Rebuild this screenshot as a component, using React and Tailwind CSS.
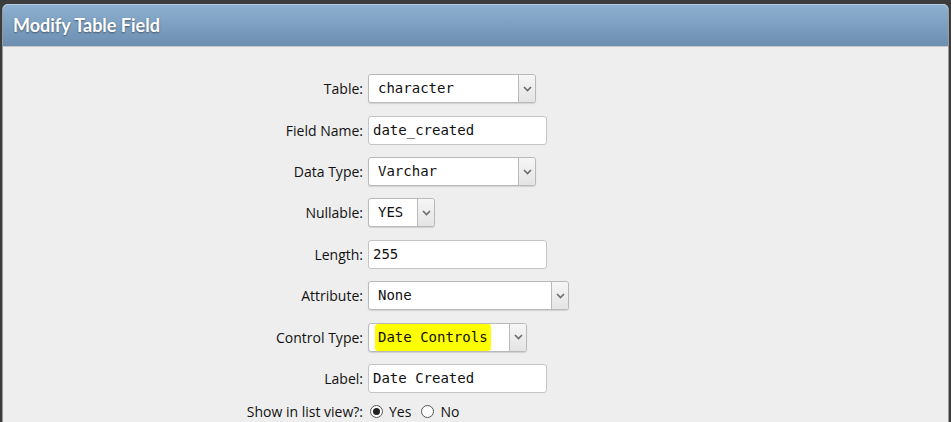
import React from 'react';

const labelFont = { fontFamily: '"Open Sans", "Noto Sans", sans-serif' };
const titleFont = { fontFamily: 'Lato, "Open Sans", sans-serif' };
const monoFont = { fontFamily: '"DejaVu Sans Mono", "Liberation Mono", monospace' };

const Chevron = () => (
  <svg width="9" height="6" viewBox="0 0 9 6">
    <path d="M1 1 L4.5 4.5 L8 1" fill="none" stroke="#6b6b6b" strokeWidth="1.6" />
  </svg>
);

const SelectBox = ({ value, width, highlight }) => (
  <div
    className="flex h-[29px] items-stretch rounded-[3px] border border-[#b9b9b9] bg-white shadow-[0_1px_1px_rgba(0,0,0,0.12)]"
    style={{ width }}
  >
    <div
      className={`flex flex-1 items-center text-[14px] text-[#111] ${highlight ? 'pl-[6px]' : 'pl-[9px]'}`}
      style={monoFont}
    >
      <span className={highlight ? 'rounded-[3px] bg-[#ffff00] px-[3px] py-[3px]' : ''}>{value}</span>
    </div>
    <div className="flex w-[17px] items-center justify-center rounded-r-[3px] border-l border-[#b9b9b9] bg-gradient-to-b from-[#f6f6f6] to-[#e4e4e4]">
      <Chevron />
    </div>
  </div>
);

const TextBox = ({ value, width }) => (
  <div
    className="flex h-[29px] items-center rounded-[3px] border border-[#c4c4c4] bg-white pl-[4px] text-[14px] text-[#111]"
    style={{ width, ...monoFont }}
  >
    {value}
  </div>
);

const Row = ({ label, children }) => (
  <div className="flex h-[41.43px] items-center">
    <div className="w-[365px] pr-[5px] text-right text-[14px] font-medium text-[#111]" style={labelFont}>
      {label}
    </div>
    {children}
  </div>
);

const Radio = ({ checked }) => (
  <span className="inline-flex h-[13px] w-[13px] items-center justify-center rounded-full border border-[#555] bg-white">
    {checked && <span className="h-[7px] w-[7px] rounded-full bg-[#222]" />}
  </span>
);

export default function App() {
  return (
    <div className="h-[422px] w-[951px] overflow-hidden bg-[#3c3c3c] pl-[2px] pr-[2px] pt-[4px]">
      <div className="h-full rounded-t-[6px] border-x border-[#9a9a9a] bg-[#eeeeee]">
        <div className="flex h-[43px] items-center rounded-t-[5px] border-b border-[#c8c8c8] bg-gradient-to-b from-[#8eb1d2] to-[#6c8fb1] pl-[10px] shadow-[inset_0_1px_0_rgba(255,255,255,0.35)]">
          <h1
            className="text-[18px] font-bold text-white [text-shadow:0_1px_2px_rgba(0,0,0,0.45)]"
            style={titleFont}
          >
            Modify Table Field
          </h1>
        </div>
        <div className="pt-[21px]">
          <Row label="Table:">
            <SelectBox value="character" width={168} />
          </Row>
          <Row label="Field Name:">
            <TextBox value="date_created" width={179} />
          </Row>
          <Row label="Data Type:">
            <SelectBox value="Varchar" width={168} />
          </Row>
          <Row label="Nullable:">
            <SelectBox value="YES" width={67} />
          </Row>
          <Row label="Length:">
            <TextBox value="255" width={179} />
          </Row>
          <Row label="Attribute:">
            <SelectBox value="None" width={201} />
          </Row>
          <Row label="Control Type:">
            <SelectBox value="Date Controls" width={159} highlight />
          </Row>
          <Row label="Label:">
            <TextBox value="Date Created" width={179} />
          </Row>
          <div className="flex h-[25px] items-center">
            <div className="w-[365px] pr-[5px] text-right text-[14px] font-medium text-[#111]" style={labelFont}>
              Show in list view?:
            </div>
            <label className="ml-[2px] flex items-center gap-[6px] text-[14px] font-medium text-[#111]" style={labelFont}>
              <Radio checked />
              Yes
            </label>
            <label className="ml-[10px] flex items-center gap-[6px] text-[14px] font-medium text-[#111]" style={labelFont}>
              <Radio />
              No
            </label>
          </div>
        </div>
      </div>
    </div>
  );
}
